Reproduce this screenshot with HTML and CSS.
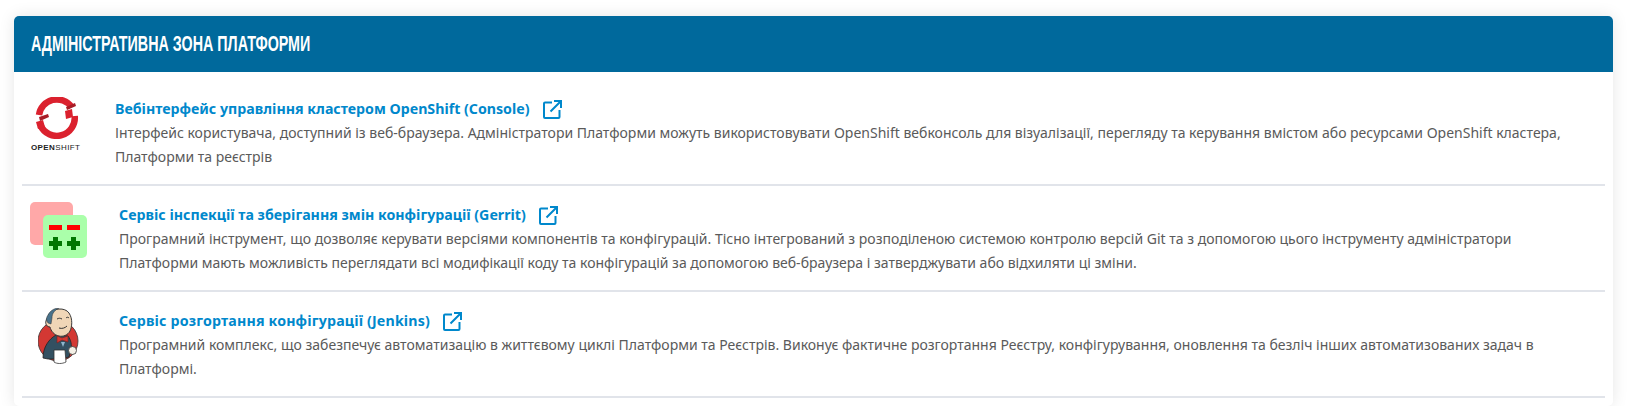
FILE: index.html
```html
<!DOCTYPE html>
<html lang="uk">
<head>
  <meta charset="UTF-8" />
  <title>Адміністративна зона платформи</title>
  <link rel="stylesheet" href="styles.css">
</head>
<body>
  <section class="card">
    <h2 class="card-header"><span class="card-title">Адміністративна зона платформи</span></h2>
    <div class="item item-first">
      <div class="item-logo logo-openshift">
        <svg class="openshift-mark" width="44" height="42" viewBox="0 0 44 42">
          <g fill="none" stroke="#db212e" stroke-width="6.500">
            <path d="M4 18A18 18 0 0 1 36.500 10"/>
            <path d="M39.700 19A18 18 0 0 1 5.500 28.500"/>
          </g>
          <path d="M30 14l7-2 1 8-7 2zM1 25l7-2 2 7-7 2z" fill="#db212e"/>
          <path d="M31 10l9-4 1 3-9 4zM4 20l9-3 1 3-9 4z" fill="#a81c26"/>
        </svg>
        <span class="openshift-name"><b>OPEN</b>SHIFT</span>
      </div>
      <div class="item-body">
        <a class="item-title" href="#">Вебінтерфейс управління кластером OpenShift (Console)<svg class="ext" width="19" height="19" viewBox="0 0 19 19"><path d="M9 2.500H2a1 1 0 0 0-1 1V17a1 1 0 0 0 1 1h13.500a1 1 0 0 0 1-1v-7M7.500 11.500l10-10M11 1h7v7" fill="none" stroke="currentColor" stroke-width="2"/></svg></a>
        <p class="item-text">Інтерфейс користувача, доступний із веб-браузера. Адміністратори Платформи можуть використовувати OpenShift вебконсоль для візуалізації, перегляду та керування вмістом або ресурсами OpenShift кластера, Платформи та реєстрів</p>
      </div>
    </div>
    <div class="item">
      <div class="item-logo logo-gerrit">
        <svg width="57" height="56" viewBox="0 0 57 56">
          <rect x="0" y="0" width="43" height="43" rx="5" fill="#ffa8a8"/>
          <rect x="13" y="13" width="44" height="43" rx="5" fill="#aaffaa"/>
          <path d="M19 23h13v5H19zM37 23h13v5H37z" fill="#ff0000"/>
          <path d="M23 35h5v4h4v5h-4v4h-5v-4h-4v-5h4zM41 35h5v4h4v5h-4v4h-5v-4h-4v-5h4z" fill="#007700"/>
        </svg>
      </div>
      <div class="item-body">
        <a class="item-title" href="#">Сервіс інспекції та зберігання змін конфігурації (Gerrit)<svg class="ext" width="19" height="19" viewBox="0 0 19 19"><path d="M9 2.500H2a1 1 0 0 0-1 1V17a1 1 0 0 0 1 1h13.500a1 1 0 0 0 1-1v-7M7.500 11.500l10-10M11 1h7v7" fill="none" stroke="currentColor" stroke-width="2"/></svg></a>
        <p class="item-text">Програмний інструмент, що дозволяє керувати версіями компонентів та конфігурацій. Тісно інтегрований з розподіленою системою контролю версій Git та з допомогою цього інструменту адміністратори Платформи мають можливість переглядати всі модифікації коду та конфігурацій за допомогою веб-браузера і затверджувати або відхиляти ці зміни.</p>
      </div>
    </div>
    <div class="item">
      <div class="item-logo logo-jenkins">
        <svg width="41" height="56" viewBox="0 0 41 56">
          <circle cx="20" cy="33" r="20" fill="#d33833" stroke="#3a3a3a" stroke-width=".8"/>
          <path d="M5 50c0-11 6-19 13-23l12 1c3 4 4 9 3 14l-2 7-8 2H10z" fill="#335061" stroke="#222" stroke-width=".8"/>
          <path d="M11 6c4-6 16-7 20-1 4 6 3 14 1 18-2 4-7 6-11 5-5-1-8-5-9-9-3 0-5-3-4-6 0-2 2-3 3-7z" fill="#f0d6b7" stroke="#3a3a3a" stroke-width="1"/>
          <path d="M10 7c2-4 6-7 11-7-4 2-7 5-7 10l-1 6-3-1c-2-3-2-5 0-8z" fill="#49728b" stroke="#333" stroke-width=".5"/>
          <path d="M19 11c2-1 3-1 5 0M28 10c1-1 2-1 3 0M21 20c3 1 6 0 8-2" fill="none" stroke="#333" stroke-width="1"/>
          <path d="M19 28l5 2 6-2v6l-6-2-5 3z" fill="#d33833" stroke="#7a1f1c" stroke-width=".6"/>
          <path d="M23 34h4l-2 5z" fill="#8fb5cc"/>
          <path d="M16 42h11l1 12c-4 2-9 2-12 0z" fill="#fff" stroke="#333" stroke-width=".8"/>
          <circle cx="34.500" cy="42.500" r="4" fill="#f4f0e6" stroke="#333" stroke-width=".8"/>
        </svg>
      </div>
      <div class="item-body">
        <a class="item-title title-wide" href="#">Сервіс розгортання конфігурації (Jenkins)<svg class="ext" width="19" height="19" viewBox="0 0 19 19"><path d="M9 2.500H2a1 1 0 0 0-1 1V17a1 1 0 0 0 1 1h13.500a1 1 0 0 0 1-1v-7M7.500 11.500l10-10M11 1h7v7" fill="none" stroke="currentColor" stroke-width="2"/></svg></a>
        <p class="item-text">Програмний комплекс, що забезпечує автоматизацію в життєвому циклі Платформи та Реєстрів. Виконує фактичне розгортання Реєстру, конфігурування, оновлення та безліч інших автоматизованих задач в Платформі.</p>
      </div>
    </div>
  </section>
</body>
</html>
```

FILE: styles.css
```css
body {
  margin: 0;
  height: 406px;
  overflow: hidden;
  background: #fff;
  font-family: "Noto Sans", Arial, sans-serif;
  padding: 16px 16px 0 14px;
  box-sizing: border-box;
}
.card {
  background: #fff;
  border-radius: 5px;
  box-shadow: 0 0 16px rgba(0, 0, 0, 0.1);
  padding-bottom: 8px;
}
.card-header {
  margin: 0;
  height: 56px;
  line-height: 56px;
  padding-left: 17px;
  background: #00699c;
  border-radius: 5px 5px 0 0;
  color: #fff;
  font-family: "Liberation Sans", sans-serif;
  font-size: 22px;
  font-weight: 700;
  text-transform: uppercase;
}
.card-title {
  display: inline-block;
  transform: scaleX(0.65);
  transform-origin: left center;
  white-space: nowrap;
}
.item {
  display: flex;
  margin: 0 8px;
  height: 106px;
  box-sizing: border-box;
  border-bottom: 2px solid #e1e4ea;
  padding: 17px 20px 0 0;
}
.item-first {
  height: 114px;
  padding-top: 25px;
}
.item-logo {
  flex-shrink: 0;
  box-sizing: border-box;
  margin-top: -1px;
}
.item-first .item-logo {
  margin-top: 0;
}
.logo-openshift {
  width: 93px;
  padding-left: 9px;
  display: flex;
  flex-direction: column;
}
.logo-gerrit {
  width: 97px;
  padding-left: 8px;
}
.logo-jenkins {
  width: 97px;
  padding-left: 16px;
}
.openshift-mark {
  margin-left: 4px;
}
.openshift-name {
  font-family: "Liberation Sans", sans-serif;
  font-size: 8px;
  line-height: 10px;
  letter-spacing: 0.4px;
  color: #222;
  margin-top: 4px;
}
.item-title {
  display: block;
  color: #0088cc;
  font-size: 14.2px;
  font-weight: 700;
  line-height: 24px;
  text-decoration: none;
}
.title-wide {
  letter-spacing: 0.17px;
}
.ext {
  margin-left: 13px;
  vertical-align: -5px;
}
.item-text {
  margin: 0;
  font-size: 14px;
  line-height: 24px;
  color: #5a5a5a;
}
```
